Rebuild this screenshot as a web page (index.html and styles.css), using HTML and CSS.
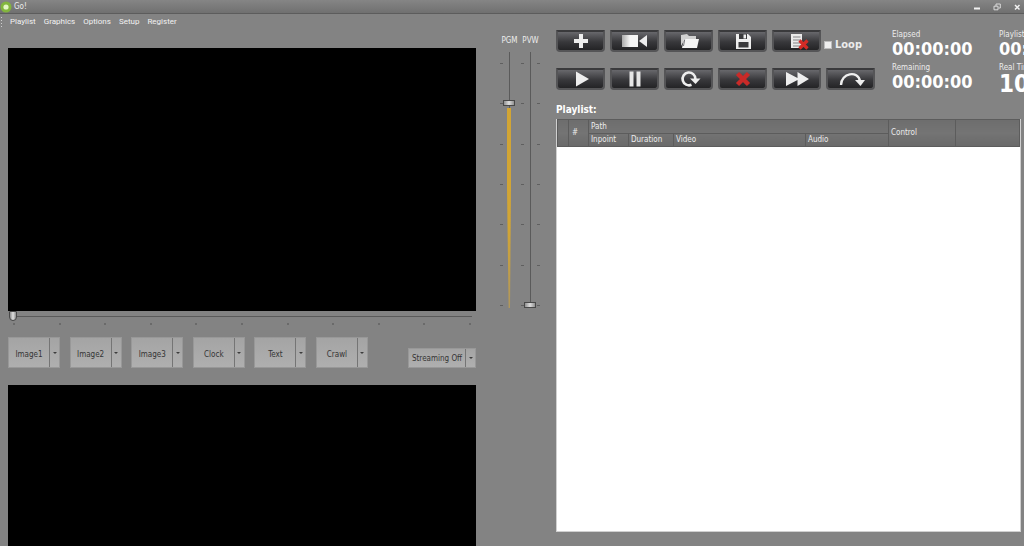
FILE: index.html
```html
<!DOCTYPE html>
<html lang="en">
<head>
<meta charset="utf-8">
<title>Go!</title>
<link rel="stylesheet" href="styles.css">
</head>
<body>
<header class="titlebar">
  <svg class="logo" viewBox="0 0 12 12"><circle cx="6" cy="6" r="5.5" fill="#83b53e"/><circle cx="6" cy="6" r="2.6" fill="#e4f5c4"/></svg>
  <span class="title">Go!</span>
  <div class="window-controls">
    <button aria-label="Minimize"><svg viewBox="0 0 8 8"><path d="M1 5.5h6" stroke="#f2f2f2" stroke-width="2"/></svg></button>
    <button aria-label="Restore"><svg viewBox="0 0 8 8"><path d="M3 3V1h4.300v4H5.500M1 3.200h4v3.600H1z" fill="none" stroke="#dadada"/></svg></button>
    <button aria-label="Close"><svg viewBox="0 0 8 8"><path d="M2 2l4.500 4.500M6.500 2L2 6.500" stroke="#f2f2f2" stroke-width="1.500"/></svg></button>
  </div>
</header>
<nav class="menubar">
  <span class="grip"></span>
  <a href="#">Playlist</a><a href="#">Graphics</a><a href="#">Options</a><a href="#">Setup</a><a href="#">Register</a>
</nav>
<main class="workspace">
  <section class="monitors">
    <div class="screen program"></div>
    <div class="seek">
      <input type="range" class="seek-range" min="0" max="100" value="0" aria-label="Position">
      <div class="seek-ticks"><i></i><i></i><i></i><i></i><i></i><i></i><i></i><i></i><i></i><i></i><i></i></div>
    </div>
    <div class="overlays">
      <div class="overlay-group">
        <div class="split"><button class="split-main">Image1</button><button class="split-arrow" aria-label="Image1 options"></button></div>
        <div class="split"><button class="split-main">Image2</button><button class="split-arrow" aria-label="Image2 options"></button></div>
        <div class="split"><button class="split-main">Image3</button><button class="split-arrow" aria-label="Image3 options"></button></div>
        <div class="split"><button class="split-main">Clock</button><button class="split-arrow" aria-label="Clock options"></button></div>
        <div class="split"><button class="split-main">Text</button><button class="split-arrow" aria-label="Text options"></button></div>
        <div class="split"><button class="split-main">Crawl</button><button class="split-arrow" aria-label="Crawl options"></button></div>
      </div>
      <div class="split streaming"><button class="split-main">Streaming Off</button><button class="split-arrow" aria-label="Streaming options"></button></div>
    </div>
    <div class="screen preview"></div>
  </section>

  <section class="levels">
    <label class="level-name" for="pgm">PGM</label>
    <label class="level-name" for="pvw">PVW</label>
    <div class="faders">
      <div class="ticks"><i></i><i></i><i></i><i></i><i></i><i></i><i></i></div>
      <div class="track pgm"><input type="range" class="fader" id="pgm" min="0" max="100" value="81"></div>
      <div class="ticks"><i></i><i></i><i></i><i></i><i></i><i></i><i></i></div>
      <div class="track"><input type="range" class="fader" id="pvw" min="0" max="100" value="0"></div>
      <div class="ticks"><i></i><i></i><i></i><i></i><i></i><i></i><i></i></div>
    </div>
  </section>

  <section class="playlist">
    <div class="top">
      <div class="transport">
        <button aria-label="Add"><svg viewBox="0 0 30 18"><path d="M15 2v14M8 9h14" stroke="#eee" stroke-width="4"/></svg></button>
        <button aria-label="Add live source"><svg viewBox="0 0 30 18"><defs><linearGradient id="cam"><stop offset="0" stop-color="#aaa"/><stop offset=".5" stop-color="#f4f4f4"/></linearGradient></defs><path d="M2 3h16v12H2z" fill="url(#cam)"/><path d="M19 9l8-6v12z" fill="#eee"/></svg></button>
        <button aria-label="Open"><svg viewBox="0 0 30 18"><path d="M7 14V3l6-1 2 2h7v3H11z" fill="#d0d0d0"/><path d="M10 7h15L23 16H8z" fill="#f4f4f4"/><path d="M9.500 14l1.200-6.500" stroke="#55555a" stroke-width=".8"/></svg></button>
        <button aria-label="Save"><svg viewBox="0 0 30 18"><path d="M8 2h12l3 3v12H8z" fill="#eee"/><path d="M11 2h8v5h-8zM10.500 10h10v5.500h-10z" fill="#3b3b3d"/><path d="M15.500 2.500h2.500v4h-2.500z" fill="#eee"/></svg></button>
        <button aria-label="Clear list"><svg viewBox="0 0 30 18"><path d="M9 2h11v14H9z" fill="#eaeaea"/><path d="M11 5h7.500M11 8h7.500M11 11h7.500M11 14h7.500" stroke="#838386" stroke-width="1"/><path d="M17.500 8.500l8 8M25.500 8.500l-8 8" stroke="#d32b26" stroke-width="3.200"/></svg></button>
        <label class="loop"><input type="checkbox">Loop</label>
        <button aria-label="Play"><svg viewBox="0 0 30 18"><path d="M10 1.500L23 9l-13 7.500z" fill="#eee"/></svg></button>
        <button aria-label="Pause"><svg viewBox="0 0 30 18"><path d="M11.500 1.500v15M18.500 1.500v15" stroke="#e6e6e6" stroke-width="4"/></svg></button>
        <button aria-label="Restart"><svg viewBox="0 0 30 18"><path d="M17.500 14.800a6.400 6.400 0 1 1 3.900-5.800" fill="none" stroke="#eee" stroke-width="2.600"/><path d="M16 8.500h10.500l-5 5.500z" fill="#eee"/></svg></button>
        <button aria-label="Remove"><svg viewBox="0 0 30 18"><path d="M9.500 3.500l11 11M20.500 3.500l-11 11" stroke="#c92a28" stroke-width="4.500"/></svg></button>
        <button aria-label="Next"><svg viewBox="0 0 30 18"><path d="M4 2l11.500 6V2L27 9l-11.500 7v-6L4 16z" fill="#eee"/></svg></button>
        <button aria-label="Skip"><svg viewBox="0 0 30 18"><path d="M5 15c0-12 17-15 19-4" fill="none" stroke="#eee" stroke-width="2.400"/><path d="M19 10h10l-4.500 6z" fill="#eee"/></svg></button>
      </div>
      <dl class="clocks">
        <div><dt>Elapsed</dt><dd>00:00:00</dd></div>
        <div><dt>Remaining</dt><dd>00:00:00</dd></div>
      </dl>
      <dl class="clocks clocks-end">
        <div><dt>Playlist Remaining</dt><dd>00:00:00</dd></div>
        <div><dt>Real Time</dt><dd class="now">10:00:00</dd></div>
      </dl>
    </div>
    <h2 class="heading">Playlist:</h2>
    <div class="list">
      <table>
        <colgroup><col class="c-mark"><col class="c-num"><col class="c-in"><col class="c-dur"><col><col class="c-audio"><col class="c-control"><col class="c-rest"></colgroup>
        <thead>
          <tr><th rowspan="2"></th><th rowspan="2" class="num">#</th><th colspan="4" class="path">Path</th><th rowspan="2">Control</th><th rowspan="2"></th></tr>
          <tr><th>Inpoint</th><th>Duration</th><th>Video</th><th>Audio</th></tr>
        </thead>
      </table>
    </div>
  </section>
</main>
</body>
</html>
```
FILE: styles.css
```css
* { box-sizing: border-box; }
body {
  margin: 0;
  height: 100vh;
  display: flex;
  flex-direction: column;
  overflow: hidden;
  background: #838383;
  color: #ececec;
  font: 8px/10px "DejaVu Sans Condensed", "Noto Sans", sans-serif;
}
button { font: inherit; padding: 0; border: 0; margin: 0; }

.titlebar {
  display: flex;
  align-items: center;
  height: 14px;
  flex: none;
  background: linear-gradient(#858585, #707070);
  border-bottom: 1px solid #5c5c5c;
}
.logo { width: 12px; height: 12px; }
.title { margin-left: 2px; flex: 1; }
.window-controls { display: flex; gap: 12px; padding-right: 3px; }
.window-controls button { width: 8px; height: 8px; background: none; }
.window-controls svg { display: block; width: 8px; height: 8px; }

.menubar {
  display: flex;
  align-items: center;
  gap: 8px;
  height: 16px;
  flex: none;
  font-family: Roboto, "Noto Sans", sans-serif;
}
.menubar a { color: #f2f2f2; text-decoration: none; }
.grip { width: 1px; height: 10px; margin-left: 1px; background: repeating-linear-gradient(#cfcfcf 0 1px, transparent 1px 3px); }

.workspace {
  flex: 1;
  min-height: 0;
  display: grid;
  grid-template-columns: minmax(0, 468fr) 80px minmax(0, 465fr);
  padding: 0 3px 0 8px;
}

.monitors { display: flex; flex-direction: column; padding-top: 18px; min-height: 0; }
.screen { background: #000; }
.program { aspect-ratio: 16 / 9; flex: none; }
.preview { flex: 1; }

.seek { padding: 0 4px 0 1px; height: 26px; flex: none; }
.seek-range {
  appearance: none;
  display: block;
  width: 100%;
  height: 10px;
  margin: 0;
  background: linear-gradient(#5a5a5a, #5a5a5a) 4px 5px / 100% 1px no-repeat;
}
.seek-range::-webkit-slider-thumb {
  appearance: none;
  width: 8px;
  height: 10px;
  border: 1px solid #484848;
  border-radius: 1px 1px 4px 4px;
  background: linear-gradient(90deg, #8c8c8c, #e0e0e0, #8c8c8c);
}
.seek-ticks { display: flex; justify-content: space-between; padding: 2px 1px 0 4px; }
.seek-ticks i { width: 2px; height: 2px; background: #6a6a6a; }

.overlays { display: flex; align-items: flex-end; justify-content: space-between; height: 31px; margin-bottom: 17px; flex: none; }
.overlay-group { display: flex; justify-content: space-between; width: 360px; }
.split { display: flex; width: 52px; height: 31px; border: 1px solid #989898; background: linear-gradient(#a4a4a4, #afafaf); }
.split button { background: none; color: #343434; }
.split-main { flex: 1; white-space: nowrap; }
.split .split-main { padding-top: 4px; }
.split .split-arrow { width: 10px; border-left: 1px solid #757575; display: flex; align-items: center; justify-content: center; }
.split-arrow::before { content: ""; border: 2px solid transparent; border-top-color: #3c3c3c; border-bottom: 0; }
.streaming { width: 68px; height: 20px; }
.streaming .split-main { padding-top: 1px; }

.levels { display: grid; grid-template-columns: 21px 21px; grid-template-rows: 22px 256px; padding-left: 23px; align-content: start; }
.level-name { text-align: center; padding-top: 6px; }
.faders { grid-column: 1 / 3; display: flex; padding-left: 1px; }
.ticks { display: flex; flex-direction: column; justify-content: space-between; width: 3px; height: 243px; margin-top: 11px; flex: none; }
.ticks i { height: 1px; background: #5f5f5f; }
.track { display: grid; width: 12px; height: 256px; margin-right: 1px; flex: none; background: linear-gradient(#5a5a5a, #5a5a5a) 50% 0 / 1px 100% no-repeat; }
.track.pgm { margin-right: 6px; background-size: 1px 56px; }
.track > *, .track::before { grid-area: 1 / 1; }
.track.pgm::before {
  content: "";
  justify-self: center;
  width: 4px;
  margin-top: 56px;
  background: linear-gradient(#d2a534 60%, #b0975c);
  clip-path: polygon(0 0, 100% 0, 100% 40%, 75% 100%, 40% 100%, 0 40%);
}
.fader {
  appearance: none;
  writing-mode: vertical-lr;
  direction: rtl;
  width: 12px;
  height: 256px;
  margin: 0;
  background: none;
}
.fader::-webkit-slider-thumb {
  appearance: none;
  width: 12px;
  height: 6px;
  border: 1px solid #484848;
  background: linear-gradient(90deg, #909090, #dedede, #909090);
}

.playlist { display: flex; flex-direction: column; min-width: 0; min-height: 0; padding-bottom: 14px; }
.top { display: flex; margin-right: -3px; overflow: hidden; flex: none; }
.transport { display: grid; grid-template-columns: repeat(6, 49px); grid-auto-rows: 22px; gap: 16px 5px; flex: none; height: 73px; }
.transport button {
  display: flex;
  align-items: center;
  justify-content: center;
  border: 2px solid #555557;
  border-radius: 1px 1px 4px 4px;
  border-top-color: #3a3a3c;
  background: linear-gradient(#68686c, #38383b 55%, #242426);
}
.transport svg { width: 30px; height: 18px; flex: none; }
.loop { display: flex; align-items: center; gap: 3px; padding-top: 8px; margin-left: -2px; font: bold 11px/14px "DejaVu Sans Condensed", "DejaVu Sans", sans-serif; }
.loop input { appearance: none; width: 8px; height: 8px; margin: 0; border: 1px solid #bdbdbd; background: #efefef; flex: none; }
.clocks { margin: 0 0 0 17px; width: 82px; flex: none; white-space: nowrap; }
.clocks dt { height: 10px; }
.clocks div { height: 33px; }
.clocks dd { margin: 0; color: #fff; font: bold 18px/18px "DejaVu Sans Condensed", "DejaVu Sans", sans-serif; }
.clocks-end { margin-left: 25px; }
.clocks .now { font-size: 24px; line-height: 22px; }
.heading { margin: 0; font: bold 10px/14px "DejaVu Sans Condensed", "DejaVu Sans", sans-serif; color: #fff; }
.list { flex: 1; margin-top: 2px; background: #fff; border: 1px solid #d0d0d0; border-top: 0; min-height: 0; }
table { width: 100%; table-layout: fixed; border-collapse: collapse; background: linear-gradient(#6d6d6d, #747474 50%, #696969); }
th { height: 13px; padding: 0 0 0 2px; font-weight: normal; text-align: left; border: 1px solid #5c5c5c; line-height: 10px; overflow: hidden; }
.path { height: 14px; }
.num { padding-left: 3px; }
.c-mark { width: 11px; }
.c-num { width: 20px; }
.c-in { width: 40px; }
.c-dur { width: 45px; }
.c-audio { width: 83px; }
.c-control { width: 67px; }
.c-rest { width: 64px; }
```
